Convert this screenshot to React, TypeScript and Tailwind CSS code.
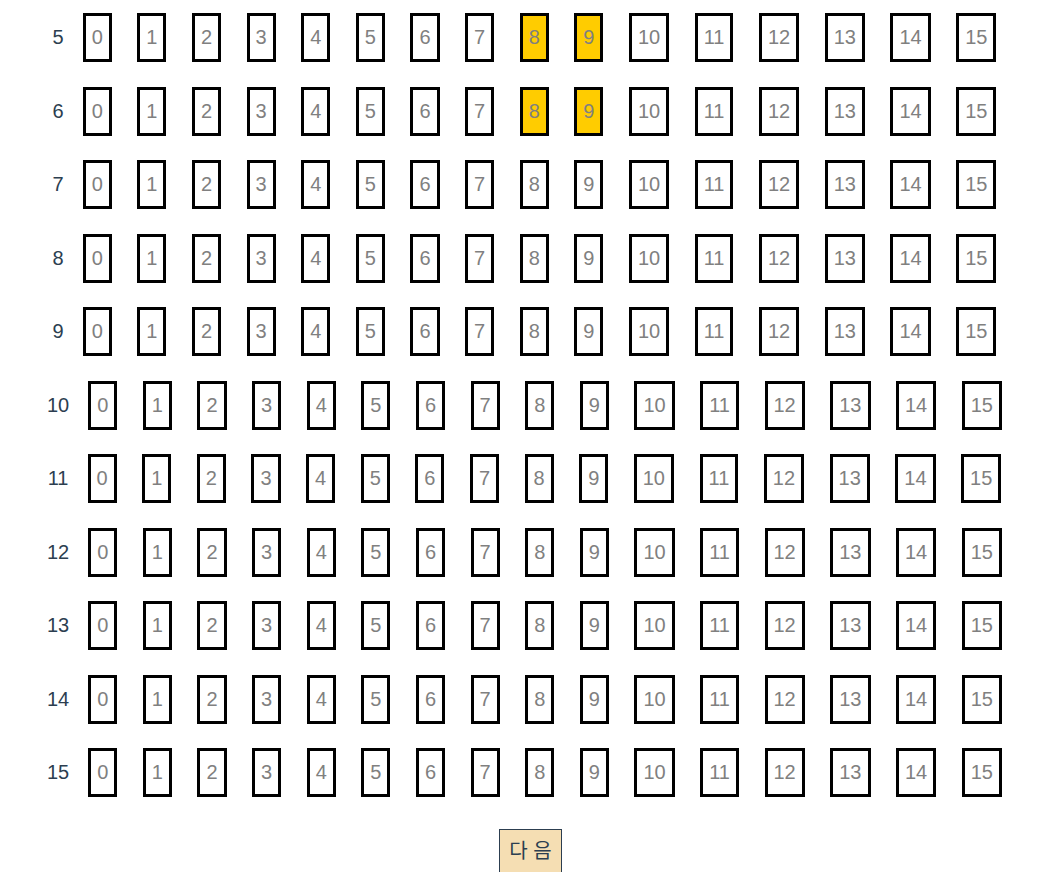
import React from 'react';

const rows = [5, 6, 7, 8, 9, 10, 11, 12, 13, 14, 15];
const seats = Array.from({ length: 16 }, (_, i) => i);

// picked seats: row 5 and 6, seat 8 and 9
const isPicked = (row: number, seat: number) => (row === 5 || row === 6) && (seat === 8 || seat === 9);

const SeatRow = ({ row }: { row: number }) => {
  return (
    <div className="flex items-center justify-center">
      <span className="mr-[19px] text-[20px] leading-[23px] text-[#2c3e50]">{row}</span>
      <div className="flex gap-[25.5px]">
        {seats.map(seat => (
          <div
            key={seat}
            className={`border-[3px] border-black px-[6px] py-[10px] text-[20px] leading-[23px] text-[#808080] ${
              isPicked(row, seat) ? 'bg-[#ffcc00]' : 'bg-white'
            }`}
          >
            {seat}
          </div>
        ))}
      </div>
    </div>
  );
};

const App = () => {
  return (
    <div
      className="min-h-[872px] bg-white pl-[6px] pt-[13px]"
      style={{ fontFamily: '"Liberation Sans", Arial, "Noto Sans CJK KR", sans-serif' }}
    >
      <div className="flex flex-col gap-[24.5px]">
        {rows.map(row => (
          <SeatRow key={row} row={row} />
        ))}
      </div>

      <div className="mt-[32px] flex justify-center">
        <button className="ml-[12px] border border-[#2c3e50] bg-[#f5deb3] px-[9.5px] py-[10px] text-[20px] leading-[23px] text-[#2c3e50]">
          다 음
        </button>
      </div>
    </div>
  );
};

export default App;
